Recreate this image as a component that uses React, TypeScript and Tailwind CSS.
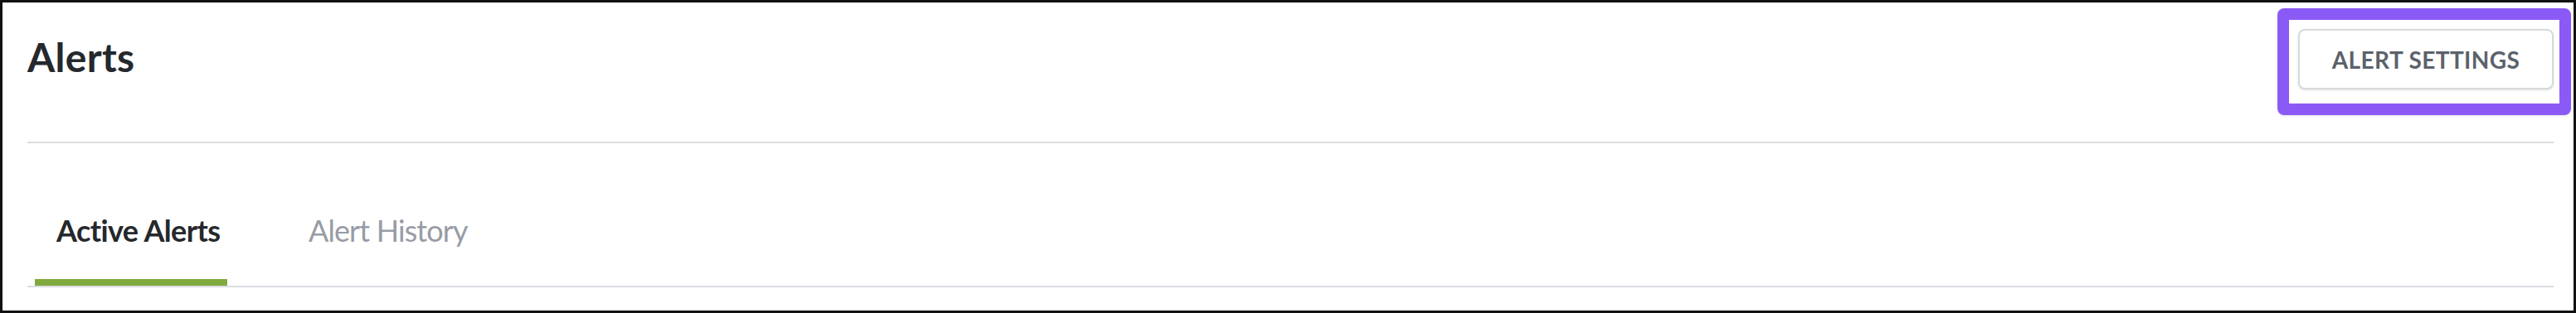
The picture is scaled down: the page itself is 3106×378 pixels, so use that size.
import { useState } from 'react';

const tabs = ['Active Alerts', 'Alert History'];

export default function App() {
  const [active, setActive] = useState(0);

  return (
    <div
      className="h-[378px] w-full border-[3px] border-[#111111] bg-white pl-[30px] pr-[24px]"
      style={{ fontFamily: 'Lato, "Noto Sans", sans-serif' }}
    >
      {/* header */}
      <div className="flex items-start justify-between border-b-2 border-[#dadde1] pt-[32px] pb-[63px]">
        <h1 className="mt-[10px] text-[48px] leading-none font-bold tracking-[0.3px] text-[#25282c]">Alerts</h1>
        <div className="relative">
          <button className="h-[73px] w-[308px] rounded-[8px] border-2 border-[#d6dade] bg-white text-[28px] leading-none font-bold tracking-[0.4px] text-[#5b626b] shadow-sm">
            ALERT SETTINGS
          </button>
          <div className="pointer-events-none absolute -top-[25px] -right-[21px] -bottom-[31px] -left-[25px] rounded-[8px] border-[14px] border-[#8b5af6] shadow-sm" />
        </div>
      </div>

      {/* tabs */}
      <nav className="mt-[87px] flex border-b-2 border-[#dadde1]">
        {tabs.map((tab, i) => (
          <button
            key={tab}
            onClick={() => setActive(i)}
            className={
              i === 0
                ? 'ml-[9px] w-[232px] border-b-[8px] pb-[41px] pl-[26px] text-left text-[36px] leading-none ' +
                  (active === i
                    ? 'border-[#80aa3e] font-bold tracking-[-0.6px] text-[#25282c]'
                    : 'border-transparent tracking-[-0.9px] text-[#979ca5]')
                : 'ml-[72px] border-b-[8px] px-[26px] pb-[41px] text-left text-[36px] leading-none ' +
                  (active === i
                    ? 'border-[#80aa3e] font-bold tracking-[-0.6px] text-[#25282c]'
                    : 'border-transparent tracking-[-0.9px] text-[#979ca5]')
            }
          >
            {tab}
          </button>
        ))}
      </nav>
    </div>
  );
}
